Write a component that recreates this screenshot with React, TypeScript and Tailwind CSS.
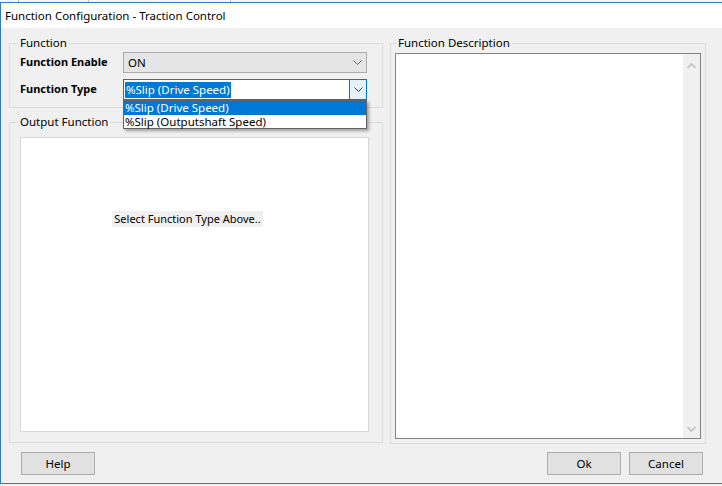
import React from "react";

const font = { fontFamily: '"Noto Sans", "Open Sans", sans-serif' };

const Chevron = ({ color = "#606060", size = 9 }: { color?: string; size?: number }) => (
  <svg width={size} height={5} viewBox="0 0 9 5" className="block">
    <polyline points="0.5,0.5 4.5,4.5 8.5,0.5" fill="none" stroke={color} strokeWidth="1" />
  </svg>
);

const ChevronUp = ({ color = "#c0c0c0" }: { color?: string }) => (
  <svg width={9} height={6} viewBox="0 0 9 6" className="block">
    <polyline points="0.5,5 4.5,1 8.5,5" fill="none" stroke={color} strokeWidth="1.6" />
  </svg>
);

const ChevronDown = ({ color = "#c0c0c0" }: { color?: string }) => (
  <svg width={9} height={6} viewBox="0 0 9 6" className="block">
    <polyline points="0.5,1 4.5,5 8.5,1" fill="none" stroke={color} strokeWidth="1.6" />
  </svg>
);

const Button = ({ label }: { label: string }) => (
  <button className="flex h-[23px] w-[74px] items-center justify-center border border-[#adadad] bg-[#e1e1e1] text-[11.5px] text-black">
    {label}
  </button>
);

export default function App() {
  return (
    <div className="h-[486px] w-[722px] overflow-hidden bg-[#f0f0f0] text-black" style={font}>
      {/* strip of the window behind */}
      <div className="flex h-[2px] bg-[#f6f6f6]">
        <div className="ml-[18px] w-px bg-[#b9b9b9]" />
        <div className="ml-[69px] w-px bg-[#b9b9b9]" />
        <div className="ml-[141px] w-px bg-[#b9b9b9]" />
      </div>

      <div className="flex h-[482px] flex-col border-y border-l border-[#2b7bd1]">
        {/* title bar */}
        <div className="flex h-[25px] items-center bg-white pl-[4px] text-[11.5px] leading-none">
          Function Configuration - Traction Control
        </div>

        {/* body */}
        <div className="flex flex-1 flex-col bg-[#f0f0f0] pl-[8px] pt-[8px] text-[11.5px]">
          <div className="flex h-[408px] items-start gap-[7px]">
            {/* left column */}
            <div className="flex w-[374px] flex-col">
              <fieldset className="relative border border-[#dcdcdc] pb-[7px] pl-[10px] pr-[14px] pt-[2px]">
                <legend className="-ml-[2px] px-[2px] leading-[14px]">Function</legend>
                <div className="flex flex-col gap-[6px]">
                  <div className="flex items-center">
                    <span className="w-[103px] text-[11px] font-bold">Function Enable</span>
                    <div className="flex h-[21px] w-[244px] items-center justify-between border border-[#acacac] bg-[#e5e5e5] pl-[4px] pr-[4px]">
                      <span>ON</span>
                      <Chevron />
                    </div>
                  </div>
                  <div className="flex items-center">
                    <span className="w-[103px] text-[11px] font-bold">Function Type</span>
                    <div className="relative flex h-[21px] w-[244px] items-center border border-[#0078d7] bg-white">
                      <div className="flex flex-1 items-center pl-px">
                        <span className="bg-[#0078d7] px-px leading-[16px] text-white">%Slip (Drive Speed)</span>
                      </div>
                      <div className="flex h-full w-[17px] items-center justify-center border-l border-[#0078d7] bg-[#e5f1fb]">
                        <Chevron color="#404040" />
                      </div>
                      {/* open list */}
                      <div className="absolute left-[-1px] top-[20px] z-10 flex w-[244px] flex-col border border-[#646464] bg-white shadow-[2px_2px_3px_rgba(0,0,0,0.35)]">
                        <div className="h-[14px] bg-[#0078d7] pl-px leading-[14px] text-white">%Slip (Drive Speed)</div>
                        <div className="h-[13px] pl-px leading-[13px]">%Slip (Outputshaft Speed)</div>
                      </div>
                    </div>
                  </div>
                </div>
              </fieldset>

              <fieldset className="mt-[7px] border border-[#dcdcdc] pb-[10px] pl-[10px] pr-[13px] pt-[8px]">
                <legend className="-ml-[2px] px-[2px] leading-[14px]">Output Function</legend>
                <div className="flex h-[295px] w-[349px] items-start justify-center border border-[#d7d7d7] bg-white pr-[14px] pt-[73px]">
                  <span className="bg-[#f0f0f0] px-[2px] text-[11px] leading-[16px]">Select Function Type Above..</span>
                </div>
              </fieldset>
            </div>

            {/* right column */}
            <fieldset className="flex h-[408px] w-[316px] flex-col border border-[#dcdcdc] pb-[4px] pl-[4px] pr-[4px] pt-[3px]">
              <legend className="ml-[1px] px-[2px] leading-[14px]">Function Description</legend>
              <div className="flex h-[386px] border border-[#828282] bg-white">
                <div className="flex-1" />
                <div className="flex w-[17px] flex-col items-center justify-between bg-[#f0f0f0] pb-[6px] pt-[9px]">
                  <ChevronUp />
                  <ChevronDown />
                </div>
              </div>
            </fieldset>
          </div>

          {/* buttons */}
          <div className="mt-[8px] flex items-center pl-[12px] pr-[19px]">
            <Button label="Help" />
            <div className="flex-1" />
            <div className="flex gap-[8px]">
              <Button label="Ok" />
              <Button label="Cancel" />
            </div>
          </div>
        </div>
      </div>
    </div>
  );
}
